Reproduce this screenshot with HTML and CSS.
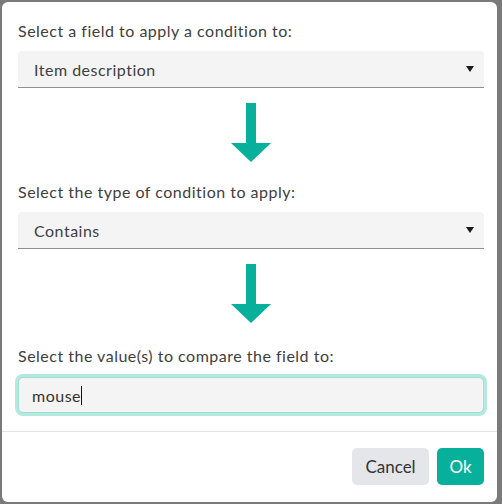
FILE: index.html
```html
<!DOCTYPE html>
<html>
<head>
<meta charset="utf-8">
<link rel="stylesheet" href="styles.css">
</head>
<body>
<div class="overlay">
  <div class="dialog">
    <div class="dialog-body">
      <div class="field">
        <div class="label">Select a field to apply a condition to:</div>
        <div class="select"><span>Item description</span><span class="caret"></span></div>
      </div>
      <div class="arrow">
        <svg width="40" height="59" viewBox="0 0 40 59"><path d="M15 0H25V40H40L20 59L0 40H15Z" fill="#07b09a"/></svg>
      </div>
      <div class="field">
        <div class="label">Select the type of condition to apply:</div>
        <div class="select"><span>Contains</span><span class="caret"></span></div>
      </div>
      <div class="arrow">
        <svg width="40" height="59" viewBox="0 0 40 59"><path d="M15 0H25V40H40L20 59L0 40H15Z" fill="#07b09a"/></svg>
      </div>
      <div class="field field-last">
        <div class="label">Select the value(s) to compare the field to:</div>
        <div class="input"><span>mouse</span><span class="cursor"></span></div>
      </div>
    </div>
    <div class="dialog-footer">
      <button class="btn btn-cancel">Cancel</button>
      <button class="btn btn-ok">Ok</button>
    </div>
  </div>
</div>
</body>
</html>
```

FILE: styles.css
```css
html, body {
  margin: 0;
  padding: 0;
}
body {
  width: 502px;
  height: 504px;
  background: #7a7a7a;
  overflow: hidden;
  font-family: "Lato", "Noto Sans", sans-serif;
}
.overlay {
  padding: 2px 5px 2px 2px;
}
.dialog {
  width: 495px;
  height: 500px;
  background: #fff;
  border-radius: 6px;
  display: flex;
  flex-direction: column;
}
.dialog-body {
  padding: 19px 13px 0 16px;
  flex: 1;
}
.label {
  font-size: 16px;
  letter-spacing: 0.5px;
  line-height: 20px;
  color: #404040;
  margin-bottom: 10px;
}
.select {
  height: 36px;
  background: #f4f4f4;
  border-bottom: 1px solid #8f8f8f;
  border-radius: 4px 4px 0 0;
  display: flex;
  align-items: center;
  justify-content: space-between;
  padding: 0 10px 0 16px;
  font-size: 16px;
  letter-spacing: 0.5px;
  color: #404040;
}
.caret {
  width: 0;
  height: 0;
  border-left: 4px solid transparent;
  border-right: 4px solid transparent;
  border-top: 6px solid #1a1a1a;
}
.arrow {
  display: flex;
  justify-content: center;
  padding: 15px 0 20px;
}
.arrow svg {
  display: block;
}
.field-last {
  padding-top: 3px;
}
.input {
  height: 34px;
  margin-top: 11px;
  background: #f4f4f4;
  border: 1px solid #9ddfd2;
  border-radius: 5px;
  box-shadow: 0 0 0 3px #b4e9df;
  display: flex;
  align-items: center;
  padding: 0 13px;
  font-size: 16px;
  letter-spacing: 0.5px;
  color: #333;
}
.cursor {
  display: inline-block;
  width: 1px;
  height: 19px;
  background: #111;
}
.dialog-footer {
  border-top: 1px solid #e3e3e3;
  padding: 16px 13px 17px 16px;
  display: flex;
  justify-content: flex-end;
  gap: 8px;
}
.btn {
  height: 37px;
  border: none;
  border-radius: 5px;
  font-family: "Lato", "Noto Sans", sans-serif;
  font-size: 17px;
  padding: 0;
  cursor: pointer;
}
.btn-cancel {
  width: 77px;
  background: #e4e6ea;
  color: #333;
}
.btn-ok {
  width: 47px;
  background: #07b09a;
  color: #fff;
}
```
